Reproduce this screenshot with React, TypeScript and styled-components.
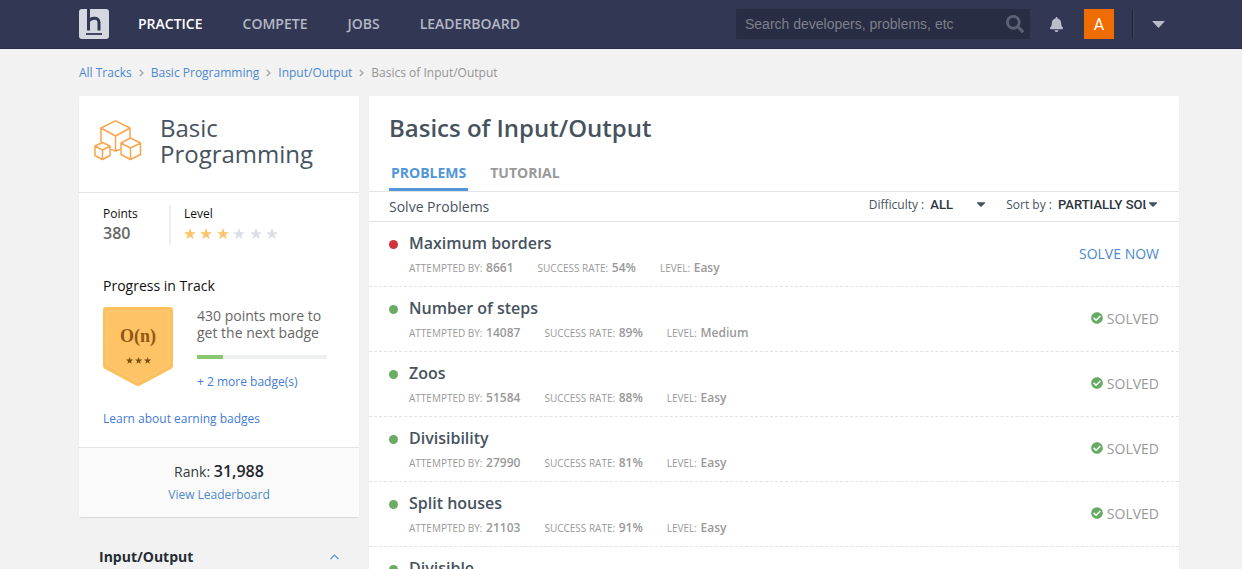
import React from "react";
import styled, { createGlobalStyle } from "styled-components";
import { FaBell, FaCaretDown, FaCheckCircle, FaSearch } from "react-icons/fa";

const GlobalStyle = createGlobalStyle`
  * { box-sizing: border-box; }
  body {
    margin: 0;
    background: #f2f2f2;
    font-family: "Open Sans", "Noto Sans", sans-serif;
    color: #46535e;
  }
  a { color: #4a88d0; text-decoration: none; }
  h1, h2, h3, p, ul, ol { margin: 0; padding: 0; font-weight: 400; }
  ul, ol { list-style: none; }
  button { border: 0; background: none; padding: 0; font: inherit; color: inherit; cursor: pointer; }
`;

const TopBar = styled.header`
  display: flex;
  align-items: center;
  height: 49px;
  padding: 0 77px 0 79px;
  background: #323754;
  border-bottom: 1px solid #292c44;
`;

const LogoLink = styled.a`
  display: flex;
`;

const MainNav = styled.nav`
  display: flex;
  flex: 1;
  gap: 40px;
  padding-left: 29px;
`;

const NavLink = styled.a<{ $active?: boolean }>`
  font-size: 14px;
  line-height: 20px;
  font-weight: 600;
  color: ${(p) => (p.$active ? "#ffffff" : "#b4b7c5")};
`;

const SearchBox = styled.label`
  display: flex;
  align-items: center;
  width: 294px;
  height: 30px;
  padding: 0 6px 0 9px;
  border-radius: 2px;
  background: #282c44;
  color: #5d6174;
  font-size: 18px;
`;

const SearchInput = styled.input`
  flex: 1;
  min-width: 0;
  padding: 0;
  border: 0;
  outline: 0;
  background: transparent;
  color: #d0d2dc;
  font: 14px "Liberation Sans", Arial, sans-serif;
  &::placeholder { color: #7d808a; opacity: 1; }
`;

const BarButton = styled.button`
  display: flex;
  color: #b9bdc9;
`;

const BellButton = styled(BarButton)`
  margin: 0 20px 0 19px;
  font-size: 15px;
`;

const Avatar = styled.button`
  width: 30px;
  height: 30px;
  background: #ef6c00;
  color: #ffffff;
  font: 400 16px Roboto, sans-serif;
`;

const BarDivider = styled.span`
  width: 2px;
  height: 30px;
  margin: 0 18px;
  border-left: 1px solid #1e2133;
  border-right: 1px solid #42475f;
`;

const Body = styled.div`
  padding: 0 63px 0 79px;
`;

const Crumbs = styled.ol`
  display: flex;
  align-items: center;
  gap: 7px;
  height: 47px;
  font-size: 12px;
  color: #949494;
`;

const Crumb = styled.li`
  display: flex;
  align-items: center;
  gap: 7px;
`;

const Columns = styled.main`
  display: grid;
  grid-template-columns: 280px 1fr;
  gap: 10px;
  align-items: start;
`;

const Card = styled.section`
  background: #ffffff;
  border-radius: 2px;
  box-shadow: 0 1px 1px #d6d6d6;
`;

const TrackHead = styled.header`
  display: flex;
  align-items: center;
  gap: 18px;
  height: 97px;
  padding: 0 15px 7px;
  border-bottom: 1px solid #e3e3e3;
`;

const TrackName = styled.h2`
  font-size: 24px;
  line-height: 26px;
`;

const Stats = styled.div`
  display: flex;
  padding: 12px 24px 0;
`;

const Stat = styled.div`
  height: 40px;
  font-size: 12px;
  line-height: 18px;
  color: #111111;
  & + & { padding-left: 13px; border-left: 2px solid #eeeeee; }
  &:first-child { width: 66px; }
`;

const Points = styled.div`
  font-size: 16px;
  line-height: 20px;
  font-weight: 600;
  color: #666666;
`;

const Stars = styled.div`
  display: flex;
  justify-content: space-between;
  width: 94px;
  padding-top: 5px;
`;

const StarIcon = styled.svg<{ $lit: boolean }>`
  fill: ${(p) => (p.$lit ? "#fbc26a" : "#dcdee6")};
`;

const Progress = styled.div`
  padding: 30px 24px 0;
`;

const ProgressTitle = styled.h3`
  font-size: 14px;
  line-height: 22px;
  color: #111111;
`;

const ProgressRow = styled.div`
  display: flex;
  gap: 24px;
  padding-top: 10px;
`;

const ProgressInfo = styled.div`
  flex: 1;
  padding-right: 8px;
  font-size: 14px;
  line-height: 17px;
  color: #666666;
`;

const Meter = styled.div`
  height: 4px;
  margin: 14px 0;
  background: #eeeff0;
`;

const MeterFill = styled.div`
  height: 100%;
  background: #88c873;
`;

const SmallLink = styled.a`
  display: block;
  font-size: 12px;
  line-height: 18px;
`;

const BadgeLink = styled(SmallLink)`
  color: #3f7cd8;
`;

const LearnLink = styled(BadgeLink)`
  padding: 19px 0;
`;

const RankBox = styled.footer`
  height: 70px;
  padding-top: 12px;
  border-top: 1px solid #e3e3e3;
  background: #fafafa;
  text-align: center;
  font-size: 14px;
  line-height: 22px;
  color: #333a40;
  strong { font-size: 16px; font-weight: 600; color: #22282d; }
`;

const LeaderboardLink = styled(SmallLink)`
  padding-top: 3px;
`;

const TrackSection = styled.button`
  display: flex;
  justify-content: space-between;
  align-items: center;
  width: 100%;
  padding: 30px 20px 0;
  font-size: 14px;
  line-height: 20px;
  font-weight: 700;
  color: #252c33;
`;

const ProblemsHead = styled.header`
  padding: 18px 20px 0;
`;

const Title = styled.h1`
  font-size: 24px;
  line-height: 28px;
  font-weight: 600;
`;

const Tabs = styled.nav`
  display: flex;
  gap: 20px;
  padding-top: 20px;
`;

const Tab = styled.a<{ $active?: boolean }>`
  height: 29px;
  padding: 0 2px;
  border-bottom: 3px solid ${(p) => (p.$active ? "#5096d8" : "transparent")};
  font-size: 14px;
  line-height: 22px;
  font-weight: 700;
  color: ${(p) => (p.$active ? "#5096d8" : "#999999")};
`;

const FilterBar = styled.div`
  display: flex;
  align-items: center;
  height: 31px;
  padding: 0 19px 0 20px;
  border: solid #e3e3e3;
  border-width: 1px 0;
`;

const FilterTitle = styled.h2`
  flex: 1;
  font-size: 14px;
`;

const Filter = styled.label`
  display: flex;
  align-items: center;
  gap: 6px;
  padding-bottom: 5px;
  margin-left: 18px;
  font-size: 12px;
`;

const SelectWrap = styled.span<{ $width: number }>`
  display: flex;
  align-items: center;
  width: ${(p) => p.$width}px;
  font-size: 14px;
`;

const Select = styled.select`
  flex: 1;
  min-width: 0;
  height: 18px;
  padding: 0;
  border: 0;
  appearance: none;
  background: none;
  overflow: hidden;
  text-overflow: clip;
  font: 500 13px Roboto, sans-serif;
  color: #2b343c;
`;

const ProblemRow = styled.li`
  display: flex;
  align-items: center;
  height: 65px;
  padding: 0 20px;
  border-bottom: 1px dashed #e3e3e3;
`;

const Dot = styled.span<{ $color: string }>`
  align-self: flex-start;
  width: 9px;
  height: 9px;
  margin: 18px 11px 0 0;
  border-radius: 50%;
  background: ${(p) => p.$color};
`;

const ProblemInfo = styled.div`
  flex: 1;
`;

const ProblemName = styled.a`
  display: block;
  font-size: 16px;
  line-height: 24px;
  font-weight: 600;
  color: #46535e;
`;

const Meta = styled.ul`
  display: flex;
  gap: 24px;
  padding-top: 3px;
  font-size: 10px;
  line-height: 20px;
  color: #999999;
  strong { margin-left: 1px; font-size: 12px; font-weight: 600; }
`;

const Solved = styled.span`
  display: flex;
  align-items: center;
  gap: 4px;
  padding-bottom: 2px;
  font-size: 14px;
  color: #999999;
  svg { font-size: 12px; color: #66ab63; }
`;

const SolveNow = styled.a`
  padding-bottom: 2px;
  font-size: 14px;
`;

const Logo = () => (
  <svg width="30" height="30" viewBox="0 0 30 30" aria-label="Home">
    <rect width="30" height="30" rx="3" fill="#d5d8e0" />
    <path d="M9.500 0V21.500M9.500 12.500C11 9 20 7 20 13.500V21.500" fill="none" stroke="#323754" strokeWidth="3" />
    <path d="M7 25H23" stroke="#323754" strokeWidth="1.800" />
  </svg>
);

const Cubes = () => (
  <svg width="48" height="42" viewBox="0 0 48 42" fill="none" stroke="#f9a44e" strokeWidth="1.500" strokeLinejoin="round">
    <path d="M7 22V8L21.500 .8 36 8V18M7 8L21.500 16 36 8M21.500 16V31M17 29.500L21.500 31 26 29.500" />
    <path d="M1 26L8.500 22.500 16 26V35.500L8.500 39.500 1 35.500ZM1 26L8.500 30 16 26M8.500 30V39.500" />
    <path d="M27 23L36.500 18 46.500 23V34.500L36.500 39.500 27 34.500ZM27 23L36.500 28 46.500 23M36.500 28V39.500" />
  </svg>
);

const STAR_PATH = "M6 0L7.500 4.200H12L8.400 6.900 9.700 11.200 6 8.600 2.300 11.200 3.600 6.900 0 4.200H4.500Z";

const Star = ({ lit }: { lit: boolean }) => (
  <StarIcon $lit={lit} width="12" height="12" viewBox="0 0 12 12">
    <path d={STAR_PATH} />
  </StarIcon>
);

const Badge = () => (
  <svg width="70" height="80" viewBox="0 0 70 80" aria-label="Badge">
    <path d="M3 0H67Q70 0 70 3V59Q70 61 68 62L38 78Q35 80 32 78L2 62Q0 61 0 59V3Q0 0 3 0Z" fill="#fdc05e" />
    <path d="M4 4H66V58L35 75 4 58Z" fill="#fdc364" stroke="#fccb7e" />
    <text x="35" y="35" textAnchor="middle" fontFamily="Liberation Serif, serif" fontWeight="700" fontSize="18" fill="#8f5713">O(n)</text>
    {[23, 32, 41].map((x) => (
      <path key={x} transform={`translate(${x} 50) scale(.6)`} d={STAR_PATH} fill="#7b4c12" />
    ))}
  </svg>
);

const ChevronRight = () => (
  <svg width="5" height="8" viewBox="0 0 5 8" fill="none" stroke="#a0a0a0" strokeWidth="1.200">
    <path d="M.8 1L4 4 .8 7" />
  </svg>
);

const ChevronUp = () => (
  <svg width="9" height="6" viewBox="0 0 9 6" fill="none" stroke="#5b93d3" strokeWidth="1.200">
    <path d="M.5 5L4.500 1 8.500 5" />
  </svg>
);

const tracks = ["All Tracks", "Basic Programming", "Input/Output"];

const problems = [
  { name: "Maximum borders", attempts: 8661, rate: 54, level: "Easy", solved: false },
  { name: "Number of steps", attempts: 14087, rate: 89, level: "Medium", solved: true },
  { name: "Zoos", attempts: 51584, rate: 88, level: "Easy", solved: true },
  { name: "Divisibility", attempts: 27990, rate: 81, level: "Easy", solved: true },
  { name: "Split houses", attempts: 21103, rate: 91, level: "Easy", solved: true },
  { name: "Divisible", attempts: 24310, rate: 85, level: "Easy", solved: true },
];

export default function App() {
  return (
    <>
      <GlobalStyle />
      <TopBar>
        <LogoLink href="#"><Logo /></LogoLink>
        <MainNav>
          <NavLink href="#" $active>PRACTICE</NavLink>
          <NavLink href="#">COMPETE</NavLink>
          <NavLink href="#">JOBS</NavLink>
          <NavLink href="#">LEADERBOARD</NavLink>
        </MainNav>
        <SearchBox>
          <SearchInput type="search" aria-label="Search" placeholder="Search developers, problems, etc" />
          <FaSearch />
        </SearchBox>
        <BellButton aria-label="Notifications"><FaBell /></BellButton>
        <Avatar>A</Avatar>
        <BarDivider />
        <BarButton aria-label="Account menu">
          <svg width="13" height="7" viewBox="0 0 13 7"><path d="M0 0H13L6.500 7Z" fill="currentColor" /></svg>
        </BarButton>
      </TopBar>
      <Body>
        <Crumbs>
          {tracks.map((track) => (
            <Crumb key={track}><a href="#">{track}</a><ChevronRight /></Crumb>
          ))}
          <Crumb>Basics of Input/Output</Crumb>
        </Crumbs>
        <Columns>
          <aside>
            <Card>
              <TrackHead>
                <Cubes />
                <TrackName>Basic<br />Programming</TrackName>
              </TrackHead>
              <Stats>
                <Stat>Points<Points>380</Points></Stat>
                <Stat>
                  Level
                  <Stars>{[1, 2, 3, 4, 5, 6].map((n) => <Star key={n} lit={n <= 3} />)}</Stars>
                </Stat>
              </Stats>
              <Progress>
                <ProgressTitle>Progress in Track</ProgressTitle>
                <ProgressRow>
                  <Badge />
                  <ProgressInfo>
                    <p>430 points more to get the next badge</p>
                    <Meter><MeterFill style={{ width: "20%" }} /></Meter>
                    <BadgeLink href="#">+ 2 more badge(s)</BadgeLink>
                  </ProgressInfo>
                </ProgressRow>
                <LearnLink href="#">Learn about earning badges</LearnLink>
              </Progress>
              <RankBox>
                <p>Rank: <strong>31,988</strong></p>
                <LeaderboardLink href="#">View Leaderboard</LeaderboardLink>
              </RankBox>
            </Card>
            <TrackSection>Input/Output<ChevronUp /></TrackSection>
          </aside>
          <Card>
            <ProblemsHead>
              <Title>Basics of Input/Output</Title>
              <Tabs>
                <Tab href="#" $active>PROBLEMS</Tab>
                <Tab href="#">TUTORIAL</Tab>
              </Tabs>
            </ProblemsHead>
            <FilterBar>
              <FilterTitle>Solve Problems</FilterTitle>
              <Filter>
                Difficulty :
                <SelectWrap $width={58}>
                  <Select defaultValue="ALL"><option>ALL</option></Select>
                  <FaCaretDown />
                </SelectWrap>
              </Filter>
              <Filter>
                Sort by :
                <SelectWrap $width={102}>
                  <Select defaultValue="PARTIALLY SOLVED"><option>PARTIALLY SOLVED</option></Select>
                  <FaCaretDown />
                </SelectWrap>
              </Filter>
            </FilterBar>
            <ul>
              {problems.map((p) => (
                <ProblemRow key={p.name}>
                  <Dot $color={p.solved ? "#6bac63" : "#d23239"} />
                  <ProblemInfo>
                    <ProblemName href="#">{p.name}</ProblemName>
                    <Meta>
                      <li>ATTEMPTED BY: <strong>{p.attempts}</strong></li>
                      <li>SUCCESS RATE: <strong>{p.rate}%</strong></li>
                      <li>LEVEL: <strong>{p.level}</strong></li>
                    </Meta>
                  </ProblemInfo>
                  {p.solved ? <Solved><FaCheckCircle />SOLVED</Solved> : <SolveNow href="#">SOLVE NOW</SolveNow>}
                </ProblemRow>
              ))}
            </ul>
          </Card>
        </Columns>
      </Body>
    </>
  );
}
